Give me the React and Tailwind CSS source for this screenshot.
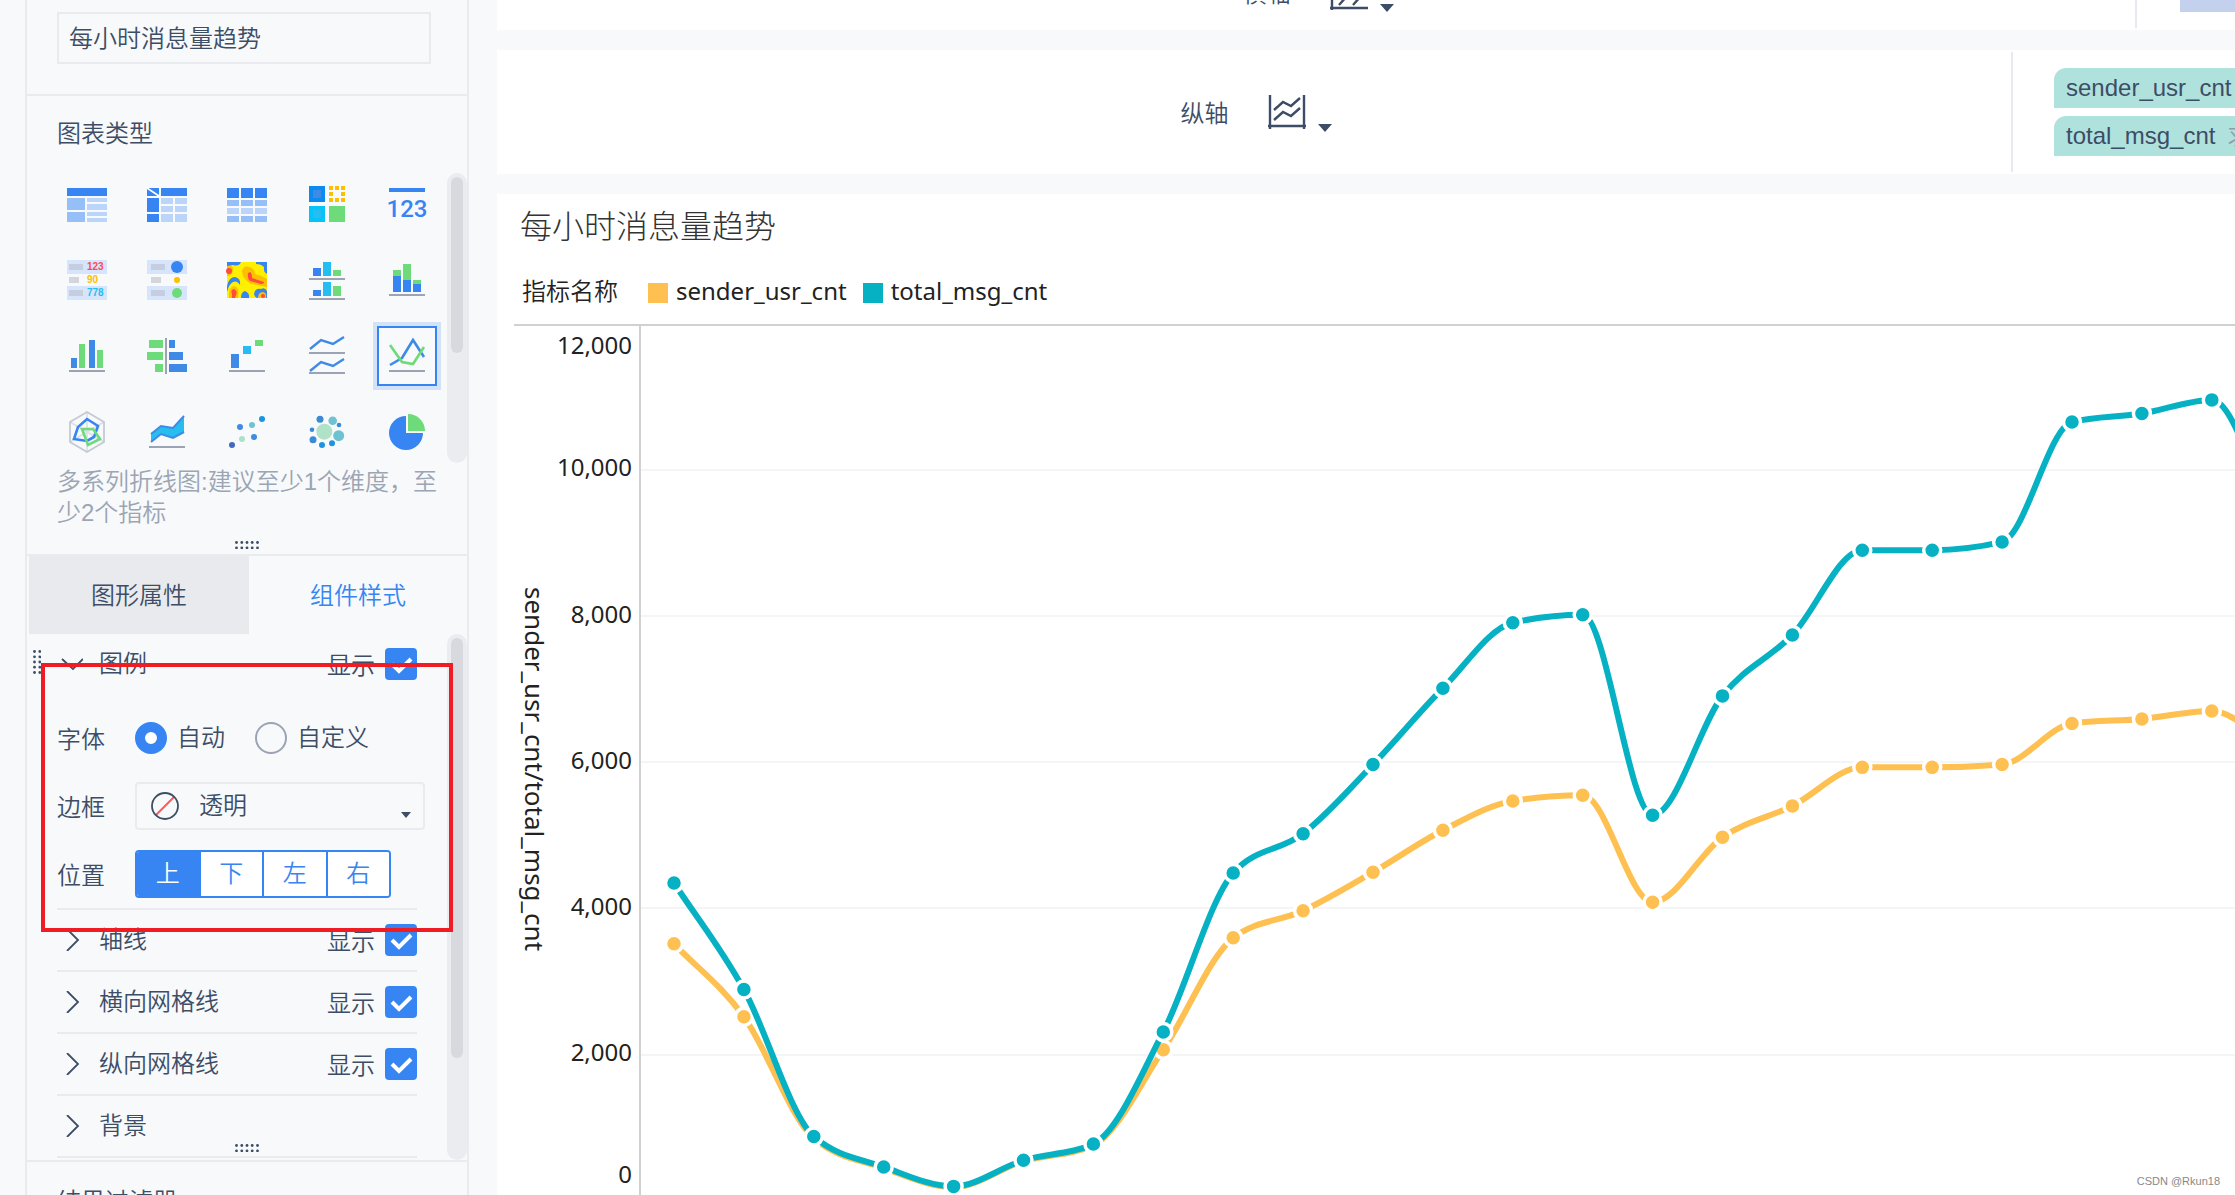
import { useState } from "react";

const BLUE = "#3685f2";
const SOFT = "#3f8ae6";
const MID = "#97bff7";
const LIGHT = "#bbd4fa";
const CYAN = "#26bdf0";
const GREEN = "#6ddb79";
const YELLOW = "#fbc000";
const GRAY = "#9ca3b4";

function Base({ y }) {
  return <path d={`M6 ${y}H42`} stroke={GRAY} strokeWidth="2" />;
}

// x, y, width, height, color
function Rects({ items }) {
  return items.map(([x, y, w, h, fill], i) => (
    <rect key={i} x={x} y={y} width={w} height={h} fill={fill} />
  ));
}

// x, y, radius, color
function Dots({ items }) {
  return items.map(([x, y, r, fill], i) => <circle key={i} cx={x} cy={y} r={r} fill={fill} />);
}

const chartTypes = [
  {
    name: "分组表",
    icon: (
      <Rects
        items={[
          [4, 8, 40, 8, BLUE],
          [4, 18, 18, 12, MID],
          [4, 32, 18, 10, MID],
          [24, 18, 20, 4, LIGHT],
          [24, 24, 20, 6, LIGHT],
          [24, 32, 20, 4, LIGHT],
          [24, 38, 20, 4, LIGHT],
        ]}
      />
    ),
  },
  {
    name: "交叉表",
    icon: (
      <>
        <Rects
          items={[
            [4, 8, 12, 8, BLUE],
            [18, 8, 26, 8, BLUE],
            [4, 18, 12, 14, BLUE],
            [4, 34, 12, 8, BLUE],
            [18, 18, 12, 6, LIGHT],
            [32, 18, 12, 6, LIGHT],
            [18, 26, 12, 6, LIGHT],
            [32, 26, 12, 6, LIGHT],
            [18, 34, 12, 8, LIGHT],
            [32, 34, 12, 8, LIGHT],
          ]}
        />
        <path d="M4 8L16 16" stroke="#fff" strokeWidth="1.6" />
      </>
    ),
  },
  {
    name: "明细表",
    icon: (
      <Rects
        items={[4, 18, 32].flatMap((x) => [
          [x, 8, 12, 10, BLUE],
          [x, 20, 12, 6, MID],
          [x, 28, 12, 6, LIGHT],
          [x, 36, 12, 6, MID],
        ])}
      />
    ),
  },
  {
    name: "颜色表格",
    icon: (
      <Rects
        items={[
          [6, 6, 16, 16, "#0b8af0"],
          [10, 10, 8, 8, SOFT],
          [26, 6, 4, 4, YELLOW],
          [32, 6, 4, 4, YELLOW],
          [38, 6, 4, 4, YELLOW],
          [26, 12, 4, 4, YELLOW],
          [38, 12, 4, 4, YELLOW],
          [26, 18, 4, 4, YELLOW],
          [32, 18, 4, 4, YELLOW],
          [38, 18, 4, 4, YELLOW],
          [6, 26, 16, 16, "#05c3f8"],
          [10, 30, 8, 8, CYAN],
          [26, 26, 16, 16, GREEN],
        ]}
      />
    ),
  },
  {
    name: "指标卡",
    icon: (
      <>
        <rect x="6" y="8" width="36" height="4" fill={BLUE} />
        <text x="24" y="37" textAnchor="middle" fill={BLUE} className="font-['Roboto',sans-serif] text-[24px] font-medium">
          123
        </text>
      </>
    ),
  },
  {
    name: "KPI指标卡",
    icon: (
      <>
        <Rects
          items={[
            [4, 4, 40, 14, "#d6e5fc"],
            [4, 30, 40, 14, "#d6e5fc"],
            [6, 8, 14, 6, "#c5cedf"],
            [6, 21, 10, 6, "#d3d6dd"],
            [6, 34, 14, 6, "#c5cedf"],
          ]}
        />
        <g className="font-['Liberation_Sans',sans-serif] text-[10px] font-bold">
          <text x="24" y="14" fill="#ff4a50">123</text>
          <text x="24" y="27" fill={YELLOW}>90</text>
          <text x="24" y="40" fill={CYAN}>778</text>
        </g>
      </>
    ),
  },
  {
    name: "状态卡",
    icon: (
      <>
        <Rects
          items={[
            [4, 4, 40, 14, "#d6e5fc"],
            [4, 30, 40, 14, "#d6e5fc"],
            [8, 8, 14, 6, "#c5cedf"],
            [8, 21, 10, 6, "#d3d6dd"],
            [8, 34, 14, 6, "#c5cedf"],
          ]}
        />
        <Dots items={[[34, 11, 6, BLUE], [34, 24, 3, YELLOW], [34, 37, 5, GREEN]]} />
      </>
    ),
  },
  {
    name: "热力图",
    icon: (
      <>
        <rect x="4" y="6" width="40" height="36" fill="#ffef00" />
        <path d="M4 6H18Q16 11 10 9Q7 9 4 13Z" fill={BLUE} />
        <path d="M33 6H44V18Q40 16 41 11Q38 8 33 8Z" fill={BLUE} />
        <path d="M4 30Q6 21 12 21Q18 22 17 29Q14 24 10 26Q6 28 4 36Z" fill={BLUE} />
        <path d="M4 10Q10 8 10 14Q9 20 4 20Z" fill={YELLOW} />
        <circle cx="6" cy="15" r="3" fill="#ff4a40" />
        <path d="M19 15Q20 9 27 11Q32 13 32 18Q38 19 44 23V31Q36 29 28 28Q19 23 19 15Z" fill={YELLOW} />
        <path d="M25 17Q29 14 29 22L41 26Q41 28 38 28L27 25Q24 22 25 17Z" fill="#ff4a40" />
        <path d="M6 42Q5 31 11 30Q17 31 15 42Z" fill={YELLOW} />
        <path d="M9 42V38Q7 34 11 33Q15 35 13 39L12 42Z" fill="#ff4a40" />
        <path d="M18 42Q18 36 22 35Q27 37 26 42Z" fill={BLUE} />
        <path d="M31 38Q32 32 38 33Q42 31 44 35V42H35Q32 42 31 38Z" fill={BLUE} />
        <path d="M35 42Q35 36 40 36Q44 37 43 42Z" fill={YELLOW} />
        <circle cx="40" cy="40" r="2" fill="#ff4a40" />
      </>
    ),
  },
  {
    name: "分区柱形图",
    icon: (
      <>
        <Rects
          items={[
            [10, 12, 8, 8, BLUE],
            [20, 6, 8, 14, CYAN],
            [30, 14, 8, 6, GREEN],
            [10, 34, 8, 6, BLUE],
            [20, 26, 8, 14, CYAN],
            [30, 30, 8, 10, GREEN],
          ]}
        />
        <Base y={23} />
        <Base y={43} />
      </>
    ),
  },
  {
    name: "堆积柱形图",
    icon: (
      <>
        <Rects
          items={[
            [10, 14, 8, 6, GREEN],
            [10, 20, 8, 16, BLUE],
            [20, 8, 8, 16, GREEN],
            [20, 24, 8, 12, BLUE],
            [30, 24, 8, 4, GREEN],
            [30, 28, 8, 8, BLUE],
          ]}
        />
        <Base y={39} />
      </>
    ),
  },
  {
    name: "多系列柱形图",
    icon: (
      <>
        <Rects
          items={[
            [8, 26, 6, 10, SOFT],
            [16, 12, 6, 24, GREEN],
            [26, 8, 6, 28, SOFT],
            [34, 18, 6, 18, GREEN],
          ]}
        />
        <Base y={39} />
      </>
    ),
  },
  {
    name: "对比柱状图",
    icon: (
      <>
        <Rects
          items={[
            [6, 8, 14, 8, GREEN],
            [4, 20, 16, 8, GREEN],
            [12, 32, 8, 8, GREEN],
            [26, 8, 6, 8, SOFT],
            [26, 20, 14, 8, SOFT],
            [26, 32, 18, 8, SOFT],
          ]}
        />
        <path d="M23 6V42" stroke={GRAY} strokeWidth="2" />
      </>
    ),
  },
  {
    name: "瀑布图",
    icon: (
      <>
        <Rects items={[[8, 22, 8, 14, SOFT], [20, 14, 8, 8, CYAN], [32, 8, 8, 6, GREEN]]} />
        <Base y={39} />
      </>
    ),
  },
  {
    name: "分区折线图",
    icon: (
      <>
        <path d="M7 17L18 8L30 12L41 5M7 39L18 30L30 34L41 27" fill="none" stroke={SOFT} strokeWidth="2.4" />
        <Base y={21} />
        <Base y={41} />
      </>
    ),
  },
  {
    name: "多系列折线图",
    icon: (
      <>
        <path d="M7 33L19 26L30 8L41 25" fill="none" stroke={SOFT} strokeWidth="2.6" />
        <path d="M7 13L19 30L30 32L41 15" fill="none" stroke={GREEN} strokeWidth="2.6" />
        <Base y={39} />
      </>
    ),
  },
  {
    name: "雷达图",
    icon: (
      <>
        <path d="M24 4V44M7 14L41 34M41 14L7 34" stroke="#dcdfe6" strokeWidth="1.6" />
        <path d="M24 4L41 14V34L24 44L7 34V14Z" fill="none" stroke="#c4c9d3" strokeWidth="1.8" />
        <path d="M24 11L35 18L31 29L24 33L11 31L15 19Z" fill="none" stroke={BLUE} strokeWidth="2.6" />
        <path d="M19 21H30L37 31L25 37Z" fill="none" stroke={GREEN} strokeWidth="2.6" />
      </>
    ),
  },
  {
    name: "范围面积图",
    icon: (
      <>
        <path d="M8 26L18 18L30 20L41 8V24L30 30L18 26L8 34Z" fill={CYAN} />
        <path d="M8 26L18 18L30 20L41 8M8 34L18 26L30 30L41 24" fill="none" stroke={SOFT} strokeWidth="2" />
        <Base y={39} />
      </>
    ),
  },
  {
    name: "散点图",
    icon: (
      <Dots
        items={[
          [9, 37, 3, "#4169c0"],
          [17, 19, 3, SOFT],
          [19, 31, 3, "#ade0c8"],
          [29, 17, 3, "#6fc3d0"],
          [31, 29, 3, SOFT],
          [39, 11, 3, "#1e93e0"],
        ]}
      />
    ),
  },
  {
    name: "聚合气泡图",
    icon: (
      <Dots
        items={[
          [21.3, 23.7, 8, "#b0e2c8"],
          [17, 11.3, 3.5, "#3a8ad8"],
          [29.7, 12.7, 4.3, "#6fc3d0"],
          [36, 17, 2.3, "#3a8ad8"],
          [35.7, 27.7, 5.5, "#6fc3d0"],
          [29, 35.3, 3, "#1e93e0"],
          [19, 37, 3, "#1e93e0"],
          [10, 31.7, 3.5, "#3a8ad8"],
          [9, 21.7, 2.3, "#3a8ad8"],
        ]}
      />
    ),
  },
  {
    name: "饼图",
    icon: (
      <>
        <path d="M23 25V8A17 17 0 1 0 40 25Z" fill={BLUE} />
        <path d="M25 23V6A17 17 0 0 1 42 23Z" fill={GREEN} />
      </>
    ),
  },
];

const series = [
  {
    name: "sender_usr_cnt",
    color: "#ffc052",
    values: [
      3518, 2521, 859, 449, 189, 544, 763, 2070, 3600, 3971, 4498, 5072, 5473, 5551, 4087, 4977, 5405, 5932, 5932, 5971,
      6532, 6595, 6704, 6100,
    ],
  },
  {
    name: "total_msg_cnt",
    color: "#05b1c2",
    values: [
      4350, 2893, 882, 466, 200, 558, 781, 2313, 4488, 5025, 5971, 7015, 7911, 8019, 5278, 6910, 7744, 8903, 8903, 9016,
      10658, 10773, 10959, 9000,
    ],
  },
];

const AXIS_X = 126;
const ZERO_Y = 877;
const px = (i) => 160 + i * 69.9;
const py = (v) => ZERO_Y - v * 0.0731;

// monotone cubic through evenly spaced points
function smoothPath(values) {
  const pts = values.map((v, i) => [px(i), py(v)]);
  const n = pts.length;
  const d = [];
  for (let i = 0; i < n - 1; i++) {
    d.push((pts[i + 1][1] - pts[i][1]) / (pts[i + 1][0] - pts[i][0]));
  }
  const t = pts.map((_, i) => {
    if (i === 0) return d[0];
    if (i === n - 1) return d[n - 2];
    if (d[i - 1] * d[i] <= 0) return 0;
    const mean = (d[i - 1] + d[i]) / 2;
    return Math.sign(mean) * Math.min(Math.abs(mean), 2 * Math.abs(d[i - 1]), 2 * Math.abs(d[i]));
  });
  let path = `M${pts[0][0]} ${pts[0][1]}`;
  for (let i = 0; i < n - 1; i++) {
    const [x0, y0] = pts[i];
    const [x1, y1] = pts[i + 1];
    const h = (x1 - x0) / 3;
    path += `C${x0 + h} ${y0 + t[i] * h} ${x1 - h} ${y1 - t[i + 1] * h} ${x1} ${y1}`;
  }
  return path;
}

const ticks = [
  { label: "12,000", y: 21 },
  { label: "10,000", y: 143, line: 146 },
  { label: "8,000", y: 290, line: 292 },
  { label: "6,000", y: 436, line: 438 },
  { label: "4,000", y: 582, line: 584 },
  { label: "2,000", y: 728, line: 731 },
  { label: "0", y: 850 },
];

function Chart() {
  return (
    <svg className="block min-h-0 w-full flex-1 font-['Noto_Sans','Open_Sans',sans-serif] text-2xl font-normal" fill="#222">
      {ticks.map((t) => (
        <g key={t.label}>
          {t.line && <path d={`M${AXIS_X} ${t.line}H4000`} stroke="#f4f5f6" strokeWidth="2" />}
          <text x="118" y={t.y + 9} textAnchor="end">
            {t.label}
          </text>
        </g>
      ))}
      <path d="M0 1H4000" stroke="#d0d1d2" strokeWidth="2" />
      <path d={`M${AXIS_X} 0V2000`} stroke="#d0d1d2" strokeWidth="2" />
      <text transform="translate(11 445) rotate(90)" textAnchor="middle" className="text-[26px]">
        sender_usr_cnt/total_msg_cnt
      </text>
      {series.map((s) => (
        <g key={s.name}>
          <path d={smoothPath(s.values)} fill="none" stroke={s.color} strokeWidth="6" />
          {s.values.map((v, i) => (
            <circle key={i} cx={px(i)} cy={py(v)} r="8.5" fill={s.color} stroke="#fff" strokeWidth="3.5" />
          ))}
        </g>
      ))}
    </svg>
  );
}

const gripLong = [1.5, 6.8, 12, 17.2, 22.5];
const gripShort = [1.5, 6.8];

function GripH() {
  return (
    <svg width="24" height="8" fill="#3d4d66">
      {gripLong.flatMap((x) => gripShort.map((y) => <circle key={x + "-" + y} cx={x} cy={y} r="1.4" />))}
    </svg>
  );
}

function GripV() {
  return (
    <svg width="8" height="24" fill="#3d4d66">
      {gripLong.flatMap((y) => gripShort.map((x) => <circle key={x + "-" + y} cx={x} cy={y} r="1.4" />))}
    </svg>
  );
}

function ShowToggle({ id }) {
  return (
    <label htmlFor={id} className="relative flex items-center gap-2.5">
      <span className="pt-1">显示</span>
      <input
        id={id}
        type="checkbox"
        defaultChecked
        className="peer size-8 appearance-none rounded-sm border-2 border-[#9ca3b4] checked:border-[#3685f2] checked:bg-[#3685f2]"
      />
      <svg viewBox="0 0 32 32" className="pointer-events-none absolute right-0 hidden size-8 peer-checked:block">
        <path d="M7 16L14 23L26 11" fill="none" stroke="#fff" strokeWidth="4" />
      </svg>
    </label>
  );
}

function StyleRow({ id, title, toggle, children }) {
  return (
    <div className="border-b-2 border-[#e9ebee]">
      <div className="flex h-15 items-center justify-between">
        <button className="flex items-center gap-4 pl-1">
          <svg width="22" height="22" viewBox="0 0 22 22" fill="none" stroke="#3d4d66" strokeWidth="1.8">
            <path d={children ? "M1 6L12 16L22 6" : "M6 0L17 11L6 22"} />
          </svg>
          {title}
        </button>
        {toggle && <ShowToggle id={id} />}
      </div>
      {children}
    </div>
  );
}

function Field({ label, htmlFor, children }) {
  return (
    <div className="flex h-12 items-center">
      <label htmlFor={htmlFor} className="w-[78px] shrink-0 pt-1">
        {label}
      </label>
      {children}
    </div>
  );
}

function FontRadio({ label, defaultChecked }) {
  return (
    <label className="flex items-center gap-2.5">
      <input
        type="radio"
        name="legend-font"
        defaultChecked={defaultChecked}
        className="size-8 appearance-none rounded-full border-2 border-[#9ca3b4] checked:border-[10px] checked:border-[#3685f2] checked:bg-white"
      />
      {label}
    </label>
  );
}

function Scrollbar({ className, thumb }) {
  return (
    <div className={`w-5 shrink-0 rounded-full bg-[#ebecf0] p-1 ${className}`}>
      <div className={`rounded-full bg-[#d8d9de] ${thumb}`} />
    </div>
  );
}

function LegendSettings() {
  const [position, setPosition] = useState("上");

  return (
    <div className="flex w-[370px] flex-col gap-5 pt-5 pb-2.5">
      <Field label="字体">
        <div className="flex gap-[30px]">
          <FontRadio label="自动" defaultChecked />
          <FontRadio label="自定义" />
        </div>
      </Field>
      <Field label="边框" htmlFor="legend-border">
        <div className="relative h-12 w-[290px]">
          <select
            id="legend-border"
            className="size-full appearance-none rounded-sm border-2 border-[#e9ebee] bg-transparent pl-[62px]"
          >
            <option>透明</option>
          </select>
          <svg width="28" height="28" className="pointer-events-none absolute top-2.5 left-4" fill="none">
            <path d="M5 23L23 5" stroke="#ff5a5a" strokeWidth="2" />
            <circle cx="14" cy="14" r="13" stroke="#3d4d66" strokeWidth="1.8" />
          </svg>
          <svg width="10" height="6" className="pointer-events-none absolute right-3.5 bottom-3" fill="#3d4d66">
            <path d="M0 0H10L5 6Z" />
          </svg>
        </div>
      </Field>
      <Field label="位置">
        <div className="flex h-12 w-64 divide-x-2 divide-[#3685f2] overflow-hidden rounded-sm border-2 border-[#3685f2]">
          {["上", "下", "左", "右"].map((p) => (
            <button
              key={p}
              onClick={() => setPosition(p)}
              className={`flex-1 ${position === p ? "bg-[#3685f2] text-white" : "bg-white text-[#3685f2]"}`}
            >
              {p}
            </button>
          ))}
        </div>
      </Field>
    </div>
  );
}

function Sidebar() {
  const [type, setType] = useState("多系列折线图");

  return (
    <aside className="flex w-[444px] shrink-0 flex-col border-x-2 border-[#e9ebee]">
      <div className="h-24 shrink-0 border-b-2 border-[#e9ebee] px-[30px] pt-3">
        <input
          aria-label="组件名称"
          defaultValue="每小时消息量趋势"
          className="h-[52px] w-[374px] border-2 border-[#e9ebee] bg-transparent px-2.5 pb-1 outline-none"
        />
      </div>

      {/* Chart types */}
      <section className="shrink-0 border-b-2 border-[#e9ebee] pt-[22px] pb-[5px]">
        <h2 className="pl-[30px] leading-8">图表类型</h2>
        <div className="mt-5 flex items-center justify-between pl-[26px]">
          <div className="grid grid-cols-5 gap-x-3 gap-y-2">
            {chartTypes.map((c) => (
              <button
                key={c.name}
                aria-label={c.name}
                onClick={() => setType(c.name)}
                className={`flex size-17 items-center justify-center border-4 ${
                  type === c.name ? "border-[#d4e2f8]" : "border-transparent"
                }`}
              >
                <span
                  className={`flex size-15 items-center justify-center border-2 ${
                    type === c.name ? "border-[#3685f2]" : "border-transparent"
                  }`}
                >
                  <svg width="48" height="48" className="shrink-0">
                    {c.icon}
                  </svg>
                </span>
              </button>
            ))}
          </div>
          <Scrollbar className="h-[290px]" thumb="h-44" />
        </div>
        <p className="pl-[30px] pr-6 leading-[31px] text-[#9ba5b3]">多系列折线图:建议至少1个维度，至少2个指标</p>
        <div className="mt-[13px] flex justify-center">
          <GripH />
        </div>
      </section>

      {/* Tabs */}
      <div className="flex h-[78px] shrink-0 pl-0.5">
        <button className="w-[220px] bg-[#e9eaed] pt-0.5">图形属性</button>
        <button className="flex-1 pt-0.5 text-[#3685f2]">组件样式</button>
      </div>

      {/* Component style */}
      <section className="relative flex h-[528px] shrink-0 border-b-2 border-[#e9ebee]">
        <div className="w-[30px] shrink-0 pt-4 pl-1.5">
          <GripV />
        </div>
        <div className="w-[360px]">
          <StyleRow id="show-legend" title="图例" toggle>
            <LegendSettings />
          </StyleRow>
          <StyleRow id="show-axis" title="轴线" toggle />
          <StyleRow id="show-grid-x" title="横向网格线" toggle />
          <StyleRow id="show-grid-y" title="纵向网格线" toggle />
          <StyleRow title="背景" />
        </div>
        <Scrollbar className="ml-auto h-full" thumb="h-[420px]" />
        <div className="absolute bottom-2 left-1/2 flex -translate-x-1/2">
          <GripH />
        </div>
        <div className="pointer-events-none absolute top-[29px] left-3.5 h-[269px] w-[412px] border-4 border-[#f01c24]" />
      </section>

      <h2 className="shrink-0 pt-6 pl-[30px] leading-8">结果过滤器</h2>
    </aside>
  );
}

function AxisLabel({ label, vertical }) {
  return (
    <div className="flex flex-1 items-center justify-center pl-1">
      <span className="pt-1">{label}</span>
      <svg width="40" height="36" className="ml-[39px]" fill="none" stroke="#3d4d66" strokeWidth="2.4">
        {vertical ? (
          <path d="M2 1V35M36 1V35M0 32H38M6 16L15 8L23 12L32 4M6 26L15 18L23 22L32 14" />
        ) : (
          <path d="M2 1V36M0 34H38M9 31L17 22L13 14L21 5M23 31L31 22L27 14L35 5" />
        )}
      </svg>
      <svg width="14" height="8" className="mt-8 ml-2.5" fill="#3d4d66">
        <path d="M0 0H14L7 8Z" />
      </svg>
    </div>
  );
}

function Chip({ children }) {
  return (
    <div className="flex h-10 w-full shrink-0 items-center gap-3 overflow-hidden rounded-tl-xl bg-[#b0e2dd] pl-3 whitespace-nowrap">
      {children}
    </div>
  );
}

export default function App() {
  return (
    <div className="relative flex h-screen gap-7 overflow-hidden bg-[#f7f9fb] pl-[25px] font-['Liberation_Sans','Noto_Sans_CJK_SC',sans-serif] text-2xl leading-8 font-[350] text-[#3d4d66]">
      <Sidebar />

      <main className="flex min-w-0 flex-1 flex-col gap-5">
        <div className="-mt-[46px] flex h-[76px] shrink-0 bg-white">
          <AxisLabel label="横轴" />
          <div className="mb-0.5 w-[100px] border-l-2 border-[#e8e8ee] pb-4 pl-[43px]">
            <div className="h-full bg-[#c4d1ee]" />
          </div>
        </div>

        <div className="flex h-[124px] shrink-0 bg-white">
          <AxisLabel label="纵轴" vertical />
          <div className="my-0.5 flex w-[224px] flex-col justify-center gap-2 border-l-2 border-[#e8e8ee] pl-[41px]">
            <Chip>sender_usr_cnt</Chip>
            <Chip>
              total_msg_cnt <span className="text-[#8f9bab]">求和</span>
            </Chip>
          </div>
        </div>

        <section className="flex min-h-0 flex-1 flex-col bg-white pl-[17px] text-[#222]">
          <h1 className="h-16 shrink-0 pt-1.5 pl-1.5 font-['KaiTi','Noto_Sans_CJK_SC',sans-serif] text-[32px] leading-12 font-light text-[#333]">
            每小时消息量趋势
          </h1>
          <div className="flex h-[66px] shrink-0 items-center pt-1 pl-2 font-['Noto_Sans','Noto_Sans_CJK_SC',sans-serif]">
            <span className="mr-[30px] pb-1">指标名称</span>
            {series.map((s) => (
              <span key={s.name} className="mr-4 flex items-center gap-2 pb-1 font-normal">
                <span className="mt-1 size-5" style={{ backgroundColor: s.color }} />
                {s.name}
              </span>
            ))}
          </div>
          <Chart />
        </section>
      </main>

      <span className="absolute right-[15px] bottom-1 text-[11px] leading-5 text-[#888]">CSDN @Rkun18</span>
    </div>
  );
}
